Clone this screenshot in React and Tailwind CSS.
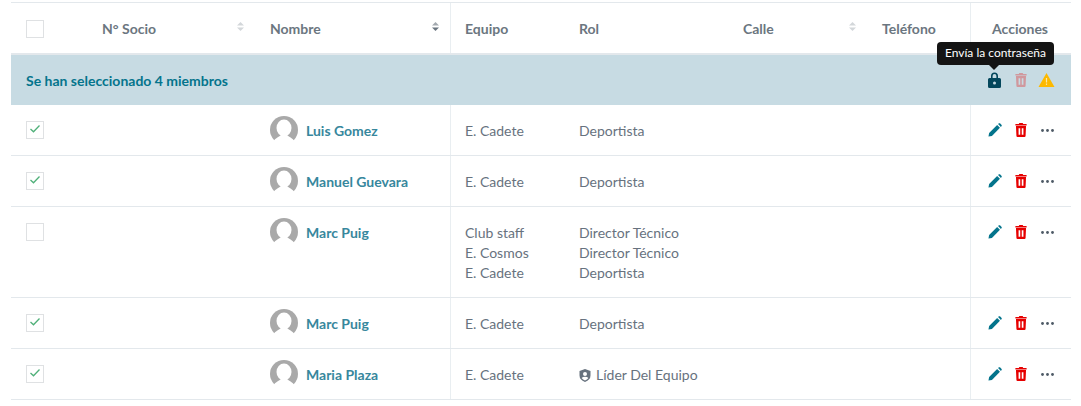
import React from 'react';

const COLS = 'grid grid-cols-[79px_165px_195px_114px_164px_139px_103px_101px]';

const members = [
  { name: 'Luis Gomez', checked: true, teams: [['E. Cadete', 'Deportista']] },
  { name: 'Manuel Guevara', checked: true, teams: [['E. Cadete', 'Deportista']] },
  {
    name: 'Marc Puig',
    checked: false,
    teams: [
      ['Club staff', 'Director Técnico'],
      ['E. Cosmos', 'Director Técnico'],
      ['E. Cadete', 'Deportista'],
    ],
  },
  { name: 'Marc Puig', checked: true, teams: [['E. Cadete', 'Deportista']] },
  { name: 'Maria Plaza', checked: true, leader: true, teams: [['E. Cadete', 'Líder Del Equipo']] },
];

const Sort = ({ dark }) => (
  <svg width="7" height="9" viewBox="0 0 7 9" className="shrink-0">
    <path d="M3.5 0 L7 3.6 H0 Z" fill={dark ? '#a3a9af' : '#d3d7da'} />
    <path d="M3.5 9 L7 5.4 H0 Z" fill={dark ? '#6b7680' : '#d3d7da'} />
  </svg>
);

const Checkbox = ({ checked }) => (
  <div className="w-[18px] h-[18px] border border-[#dfe1e3] bg-white flex items-center justify-center">
    {checked && (
      <svg width="12" height="10" viewBox="0 0 12 10" className="-mt-[3px]">
        <path d="M1.5 5 L4.5 7.8 L10.5 1.5" fill="none" stroke="#4fb079" strokeWidth="1.3" />
      </svg>
    )}
  </div>
);

const Avatar = () => (
  <svg width="28" height="28" viewBox="0 0 28 28" className="shrink-0">
    <circle cx="14" cy="14" r="14" fill="#a9a9a9" />
    <ellipse cx="14" cy="12" rx="7.5" ry="8.5" fill="#fff" />
    <path d="M1.5 29 C3 23 9 21 11 19 H17 C19 21 25 23 26.5 29 Z" fill="#fff" />
  </svg>
);

const Pencil = () => (
  <svg width="14" height="14" viewBox="0 0 15 15">
    <path d="M0.5 14.5 L1.2 10.8 L9.8 2.2 L12.8 5.2 L4.2 13.8 Z" fill="#04748c" />
    <path d="M10.8 1.2 L11.7 0.4 Q12.2 0 12.8 0.4 L14.6 2.2 Q15 2.8 14.6 3.3 L13.8 4.2 Z" fill="#04748c" />
  </svg>
);

const Trash = ({ faded }) => (
  <svg width="12" height="14" viewBox="0 0 12 15" className={faded ? 'opacity-30' : ''}>
    <path d="M4.2 0 H7.8 L8.4 1 H12 V2.6 H0 V1 H3.6 Z" fill="#e60000" />
    <path fillRule="evenodd" d="M0.6 3.2 H11.4 L10.9 14 Q10.8 15 9.8 15 H2.2 Q1.2 15 1.1 14 Z M3.4 5.5 V12.6 H5.2 V5.5 Z M6.8 5.5 V12.6 H8.6 V5.5 Z" fill="#e60000" />
  </svg>
);

const Dots = () => (
  <svg width="13" height="3" viewBox="0 0 13 3">
    <circle cx="1.5" cy="1.5" r="1.4" fill="#4e5a66" />
    <circle cx="6.5" cy="1.5" r="1.4" fill="#4e5a66" />
    <circle cx="11.5" cy="1.5" r="1.4" fill="#4e5a66" />
  </svg>
);

const Lock = () => (
  <svg width="13" height="16" viewBox="0 0 13 16">
    <path fillRule="evenodd" d="M3 6 V4 A3.5 3.5 0 0 1 10 4 V6 H11.5 Q13 6 13 7.5 V14.5 Q13 16 11.5 16 H1.5 Q0 16 0 14.5 V7.5 Q0 6 1.5 6 Z M4.6 6 H8.4 V4 A1.9 1.9 0 0 0 4.6 4 Z M6.5 9.6 A1.5 1.5 0 1 0 6.5 12.6 A1.5 1.5 0 1 0 6.5 9.6 Z" fill="#04475c" />
  </svg>
);

const Warning = () => (
  <svg width="17" height="14" viewBox="0 0 16 14">
    <path d="M8 0 L16 14 H0 Z" fill="#fdb900" />
    <rect x="7.4" y="5" width="1.2" height="4.5" fill="#fde9a8" />
    <rect x="7.4" y="10.5" width="1.2" height="1.4" fill="#fde9a8" />
  </svg>
);

const ShieldUser = () => (
  <svg width="12" height="13" viewBox="0 0 12 13" className="shrink-0">
    <path fillRule="evenodd" d="M6 0 L11.5 2 V6.5 Q11.5 10.8 6 13 Q0.5 10.8 0.5 6.5 V2 Z M6 3 A2 2 0 1 0 6 7 A2 2 0 1 0 6 3 Z M2.6 9 Q4 10.8 6 11.5 Q8 10.8 9.4 9 Q8.2 7.8 6 7.8 Q3.8 7.8 2.6 9 Z" fill="#67727e" />
  </svg>
);

const MemberRow = ({ member }) => (
  <div className={`${COLS} border-b border-[#e3e8ec] text-[14px] text-[#67727e]`}>
    <div className="pl-[15px] pt-[16px]">
      <Checkbox checked={member.checked} />
    </div>
    <div />
    <div className="flex items-start gap-[8px] pl-[15px] pt-[11px] pb-[10px]">
      <Avatar />
      <span className="font-bold text-[#37879d] leading-[20px] pt-[5px]">{member.name}</span>
    </div>
    <div className="border-l border-[#e9eef1] pl-[14px] pt-[16px] pb-[14px] leading-[20px]">
      {member.teams.map((t, i) => (
        <div key={i}>{t[0]}</div>
      ))}
    </div>
    <div className="pl-[15px] pt-[16px] pb-[14px] leading-[20px]">
      {member.teams.map((t, i) => (
        <div key={i} className="flex items-center gap-[5px]">
          {member.leader && <ShieldUser />}
          {t[1]}
        </div>
      ))}
    </div>
    <div />
    <div />
    <div className="border-l border-[#e9eef1] flex items-start gap-[13px] pl-[17px] pt-[18px]">
      <Pencil />
      <Trash />
      <div className="pt-[6px] pl-[1px]">
        <Dots />
      </div>
    </div>
  </div>
);

export default function App() {
  return (
    <div className="relative w-[1081px] h-[406px] overflow-hidden bg-white pl-[11px] pr-[10px] pt-[2px] font-['Lato','Open_Sans',sans-serif]">
      <div className={`${COLS} h-[53px] border-t border-b-2 border-t-[#e3e8ec] border-b-[#e3e8ec] text-[14px] font-bold text-[#6b7680] items-stretch`}>
        <div className="pl-[15px] pt-[1px] flex items-center">
          <Checkbox />
        </div>
        <div className="pl-[12px] pr-[11px] pt-[1px] flex items-center justify-between">
          <span>N° Socio</span>
          <span className="-mt-[5px]"><Sort /></span>
        </div>
        <div className="pl-[15px] pr-[11px] pt-[1px] flex items-center justify-between">
          <span>Nombre</span>
          <span className="-mt-[5px]"><Sort dark /></span>
        </div>
        <div className="border-l border-[#e9eef1] pl-[14px] pt-[1px] flex items-center">Equipo</div>
        <div className="pl-[15px] pt-[1px] flex items-center">Rol</div>
        <div className="pl-[15px] pr-[11px] pt-[1px] flex items-center justify-between">
          <span>Calle</span>
          <span className="-mt-[5px]"><Sort /></span>
        </div>
        <div className="pl-[15px] pt-[1px] flex items-center">Teléfono</div>
        <div className="border-l border-[#e9eef1] pl-[21px] pt-[1px] flex items-center">Acciones</div>
      </div>

      <div className="h-[50px] bg-[#c7dbe3] flex items-center justify-between pl-[15px] pr-[16px]">
        <span className="text-[14px] font-bold text-[#04748c]">Se han seleccionado 4 miembros</span>
        <div className="flex items-center gap-[11px]">
          <div className="mr-[3px] flex">
            <Lock />
          </div>
          <Trash faded />
          <Warning />
        </div>
      </div>

      {members.map((m, i) => (
        <MemberRow key={i} member={m} />
      ))}

      <div className="absolute left-[937px] top-[42px] w-[117px] h-[23px] bg-[#141414] rounded-[4px] text-white text-[12px] leading-[22px] text-center">
        Envía la contraseña
        <div className="absolute left-[52px] top-[23px] w-0 h-0 border-x-[5px] border-x-transparent border-t-[5px] border-t-[#141414]" />
      </div>
    </div>
  );
}
